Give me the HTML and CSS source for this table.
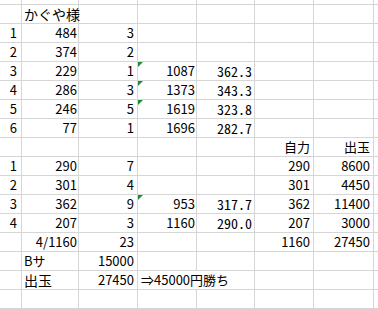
FILE: index.html
```html
<!DOCTYPE html>
<html lang="ja">
<head>
<meta charset="utf-8">
<title>かぐや様</title>
<link rel="stylesheet" href="styles.css">
</head>
<body>
<div class="sheet">
  <div class="row top"><div></div><div></div><div></div><div></div><div></div><div></div><div></div><div></div></div>
  <div class="row"><div></div><div class="l jp">かぐや様</div><div></div><div></div><div></div><div></div><div></div><div></div></div>
  <div class="row"><div>1</div><div>484</div><div>3</div><div></div><div class="mono"></div><div></div><div></div><div></div></div>
  <div class="row"><div>2</div><div>374</div><div>2</div><div></div><div class="mono"></div><div></div><div></div><div></div></div>
  <div class="row"><div>3</div><div>229</div><div>1</div><div class="warn">1087</div><div class="mono">362.3</div><div></div><div></div><div></div></div>
  <div class="row"><div>4</div><div>286</div><div>3</div><div class="warn">1373</div><div class="mono">343.3</div><div></div><div></div><div></div></div>
  <div class="row"><div>5</div><div>246</div><div>5</div><div class="warn">1619</div><div class="mono">323.8</div><div></div><div></div><div></div></div>
  <div class="row"><div>6</div><div>77</div><div>1</div><div>1696</div><div class="mono">282.7</div><div></div><div></div><div></div></div>
  <div class="row"><div></div><div></div><div></div><div></div><div class="mono"></div><div>自力</div><div>出玉</div><div></div></div>
  <div class="row"><div>1</div><div>290</div><div>7</div><div></div><div class="mono"></div><div>290</div><div>8600</div><div></div></div>
  <div class="row"><div>2</div><div>301</div><div>4</div><div></div><div class="mono"></div><div>301</div><div>4450</div><div></div></div>
  <div class="row"><div>3</div><div>362</div><div>9</div><div class="warn">953</div><div class="mono">317.7</div><div>362</div><div>11400</div><div></div></div>
  <div class="row"><div>4</div><div>207</div><div>3</div><div>1160</div><div class="mono">290.0</div><div>207</div><div>3000</div><div></div></div>
  <div class="row"><div></div><div>4/1160</div><div>23</div><div></div><div class="mono"></div><div>1160</div><div>27450</div><div></div></div>
  <div class="row"><div></div><div class="l">Bサ</div><div>15000</div><div></div><div class="mono"></div><div></div><div></div><div></div></div>
  <div class="row"><div></div><div class="l jp">出玉</div><div>27450</div><div class="l span2">⇒45000円勝ち</div><div class="f"></div><div class="g"></div><div class="h"></div></div>
  <div class="row"><div></div><div></div><div></div><div></div><div class="mono"></div><div></div><div></div><div></div></div>
</div>
</body>
</html>
```
FILE: styles.css
```css
html, body {
  margin: 0;
  padding: 0;
  background: #ffffff;
}
.sheet {
  width: 378px;
  height: 309px;
  overflow: hidden;
  font-family: "Noto Sans CJK JP", "Noto Sans", sans-serif;
  font-size: 13px;
  color: #000;
}
.row {
  display: grid;
  grid-template-columns: 22px 57px 59px 59px 58px 59px 60px 40px;
  height: 19px;
}
.row.top {
  height: 5px;
}
.row > div {
  box-sizing: border-box;
  border-right: 1px solid #d6d6d6;
  border-bottom: 1px solid #d6d6d6;
  text-align: right;
  line-height: 18px;
  white-space: nowrap;
  position: relative;
}
.row > div:nth-child(1) { padding-right: 4px; }
.row > div:nth-child(2) { padding-right: 1px; }
.row > div:nth-child(3) { padding-right: 3px; }
.row > div:nth-child(4) { padding-right: 1px; }
.row > div:nth-child(5) { padding-right: 2px; }
.row > div:nth-child(6) { padding-right: 3px; }
.row > div:nth-child(7) { padding-right: 3px; }
.row > div.l {
  text-align: left;
  padding-left: 2px;
  padding-right: 0;
}
.row > div.jp {
  font-size: 14px;
}
.row > div.span2 {
  grid-column: span 2;
  padding-left: 3px;
}
.mono {
  font-family: "Noto Sans Mono CJK JP", "DejaVu Sans Mono", monospace;
  font-size: 14px;
}
.warn::before {
  content: "";
  position: absolute;
  left: 0;
  top: 0;
  width: 0;
  height: 0;
  border-top: 5px solid #1d8b3a;
  border-right: 5px solid transparent;
}
```
